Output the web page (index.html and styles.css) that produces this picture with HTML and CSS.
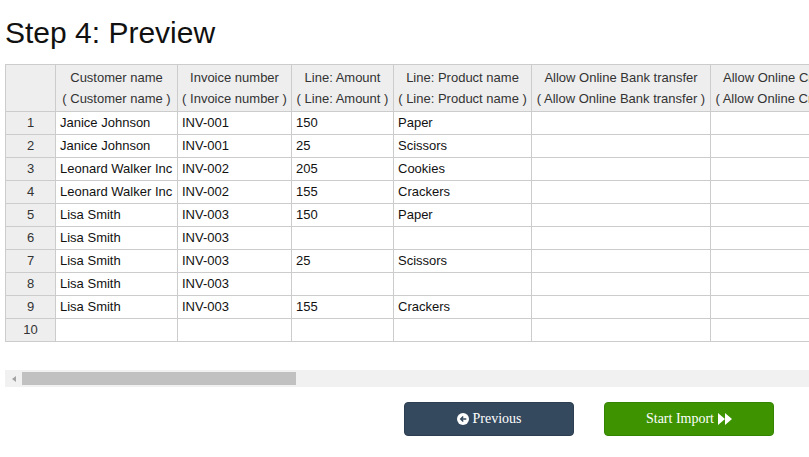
FILE: index.html
```html
<!DOCTYPE html>
<html lang="en">
<head>
    <meta charset="UTF-8">
    <meta name="viewport" content="width=device-width, initial-scale=1.0">
    <title>Import - Preview</title>
    <link rel="stylesheet" href="styles.css">
</head>
<body>
    <main class="step">
        <h1>Step 4: Preview</h1>

        <div class="grid-wrap">
            <table class="grid">
                <colgroup>
                    <col class="c-num">
                    <col class="c-customer">
                    <col class="c-invoice">
                    <col class="c-amount">
                    <col class="c-product">
                    <col class="c-bank">
                    <col class="c-card">
                </colgroup>
                <thead>
                    <tr>
                        <th></th>
                        <th>Customer name<br>( Customer name )</th>
                        <th>Invoice number<br>( Invoice number )</th>
                        <th>Line: Amount<br>( Line: Amount )</th>
                        <th>Line: Product name<br>( Line: Product name )</th>
                        <th>Allow Online Bank transfer<br>( Allow Online Bank transfer )</th>
                        <th>Allow Online Credit card payment<br>( Allow Online Credit card payment )</th>
                    </tr>
                </thead>
                <tbody>
                    <tr><td class="num">1</td><td>Janice Johnson</td><td>INV-001</td><td>150</td><td>Paper</td><td></td><td></td></tr>
                    <tr><td class="num">2</td><td>Janice Johnson</td><td>INV-001</td><td>25</td><td>Scissors</td><td></td><td></td></tr>
                    <tr><td class="num">3</td><td>Leonard Walker Inc</td><td>INV-002</td><td>205</td><td>Cookies</td><td></td><td></td></tr>
                    <tr><td class="num">4</td><td>Leonard Walker Inc</td><td>INV-002</td><td>155</td><td>Crackers</td><td></td><td></td></tr>
                    <tr><td class="num">5</td><td>Lisa Smith</td><td>INV-003</td><td>150</td><td>Paper</td><td></td><td></td></tr>
                    <tr><td class="num">6</td><td>Lisa Smith</td><td>INV-003</td><td></td><td></td><td></td><td></td></tr>
                    <tr><td class="num">7</td><td>Lisa Smith</td><td>INV-003</td><td>25</td><td>Scissors</td><td></td><td></td></tr>
                    <tr><td class="num">8</td><td>Lisa Smith</td><td>INV-003</td><td></td><td></td><td></td><td></td></tr>
                    <tr><td class="num">9</td><td>Lisa Smith</td><td>INV-003</td><td>155</td><td>Crackers</td><td></td><td></td></tr>
                    <tr><td class="num">10</td><td></td><td></td><td></td><td></td><td></td><td></td></tr>
                </tbody>
            </table>
        </div>

        <!-- horizontal scrollbar of the grid -->
        <div class="hscroll">
            <span class="hscroll-arrow"></span>
            <span class="hscroll-thumb"></span>
        </div>

        <div class="actions">
            <button class="btn btn-prev">
                <svg width="12" height="12" viewBox="0 0 16 16">
                    <circle cx="8" cy="8" r="8" fill="#fff"/>
                    <path d="M3.6 8 L7.6 4 L9 5.4 L7.4 7 H12.4 V9 H7.4 L9 10.6 L7.6 12 Z" fill="#34495e"/>
                </svg>
                Previous
            </button>
            <button class="btn btn-next">
                Start Import
                <svg width="14" height="12" viewBox="0 0 14 12">
                    <path d="M0 0 V12 L7 6 Z M7 0 V12 L14 6 Z" fill="#fff"/>
                </svg>
            </button>
        </div>
    </main>
</body>
</html>
```

FILE: styles.css
```css
body {
    margin: 0;
    font-family: "Liberation Sans", Arial, sans-serif;
    color: #000;
    background: #fff;
    overflow: hidden;
}

.step {
    padding: 0 0 0 5px;
}

h1 {
    font-size: 30px;
    font-weight: normal;
    line-height: 36px;
    margin: 15px 0 13px 0;
    color: #111;
}

.grid-wrap {
    overflow: hidden;
}

.grid {
    border-collapse: collapse;
    table-layout: fixed;
    width: 923px;
    font-size: 13px;

    .c-num { width: 50px; }
    .c-customer { width: 122px; }
    .c-invoice { width: 114px; }
    .c-amount { width: 102px; }
    .c-product { width: 138px; }
    .c-bank { width: 179px; }
    .c-card { width: 218px; }

    th, td {
        border: 1px solid #ccc;
        white-space: nowrap;
        overflow: hidden;
    }

    th {
        background: #eee;
        color: #333;
        font-weight: normal;
        line-height: 21px;
        padding: 2px 4px;
        text-align: center;
    }

    td {
        line-height: 18px;
        padding: 2px 4px;
        height: 18px;
        color: #111;
    }

    td.num {
        background: #eee;
        color: #333;
        text-align: center;
    }
}

.hscroll {
    display: flex;
    align-items: center;
    height: 17px;
    margin-top: 28px;
    background: #f1f1f1;

    .hscroll-arrow {
        width: 0;
        height: 0;
        margin: 0 6px 0 7px;
        border-top: 3px solid transparent;
        border-bottom: 3px solid transparent;
        border-right: 4px solid #a3a3a3;
    }

    .hscroll-thumb {
        width: 274px;
        height: 13px;
        background: #c1c1c1;
    }
}

.actions {
    display: flex;
    justify-content: flex-end;
    gap: 30px;
    margin-top: 15px;
    padding-right: 35px;
}

.btn {
    display: flex;
    align-items: center;
    justify-content: center;
    gap: 4px;
    width: 170px;
    height: 34px;
    border-radius: 4px;
    color: #fff;
    font-family: "Liberation Serif", "Times New Roman", serif;
    font-size: 14px;
    font-weight: normal;
    cursor: pointer;
    padding: 0;
}

.btn-prev {
    background: #34495e;
    border: 1px solid #2c3e50;
}

.btn-next {
    background: #3d9400;
    border: 1px solid #368300;
}
```
